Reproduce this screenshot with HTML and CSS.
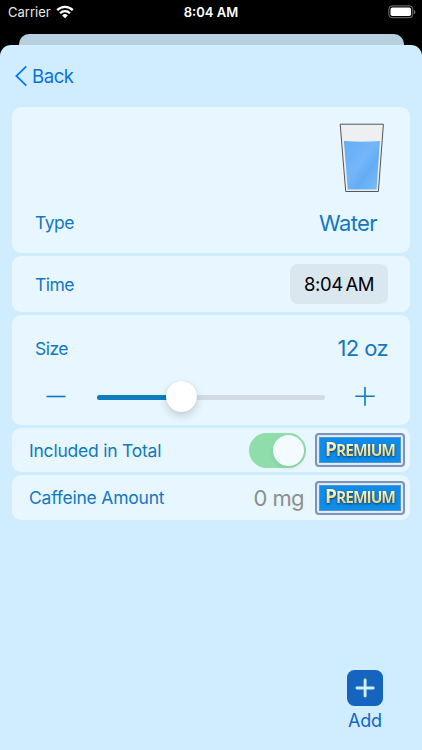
FILE: index.html
```html
<!DOCTYPE html>
<html lang="en">
<head>
    <meta charset="UTF-8">
    <meta name="viewport" content="width=device-width, initial-scale=1.0">
    <title>Add Drink</title>
    <link rel="stylesheet" href="styles.css">
</head>
<body>
    <header class="status-bar">
        <div class="carrier">
            <span>Carrier</span>
            <svg width="18" height="14" viewBox="0 0 18 14">
                <g fill="none" stroke="#fff" stroke-width="2.3">
                    <path d="M1.2 5.1a11 11 0 0 1 15.6 0"/>
                    <path d="M4.1 8.2a6.9 6.9 0 0 1 9.8 0"/>
                </g>
                <path d="M9 13.2L6.2 10.4a4 4 0 0 1 5.6 0z" fill="#fff"/>
            </svg>
        </div>
        <div class="clock">8:04 AM</div>
        <svg class="battery" width="28" height="14" viewBox="0 0 28 14">
            <rect x="0.8" y="0.9" width="24" height="11.8" rx="3.2" fill="none" stroke="#777"/>
            <rect x="2.5" y="2.6" width="20.6" height="8.4" rx="1.8" fill="#fff"/>
            <path d="M26 5v4q1.4-.6 1.4-2T26 5z" fill="#777"/>
        </svg>
    </header>
    <div class="back-sheet"></div>
    <main class="sheet">
        <nav class="nav">
            <svg width="13" height="22" viewBox="0 0 13 22">
                <path d="M11.3 1.3L1.4 11l9.9 9.7" fill="none" stroke="#0a7aea" stroke-width="1.8"/>
            </svg>
            <span>Back</span>
        </nav>

        <section class="card type-card">
            <svg class="glass" width="46" height="70" viewBox="0 0 46 70">
                <defs>
                    <linearGradient id="water" x1="0" y1="0" x2="1" y2="1">
                        <stop offset="0" stop-color="#62acf5"/>
                        <stop offset="0.45" stop-color="#74b6fa"/>
                        <stop offset="0.65" stop-color="#64adf6"/>
                        <stop offset="1" stop-color="#7cbbf8"/>
                    </linearGradient>
                </defs>
                <path d="M1.2 1.2h43.2l-5 67.3H6.7z" fill="#eeeff0" stroke="#555" stroke-width="1"/>
                <path d="M4.9 18q18 1.4 36 0L37.6 66.4H8.7z" fill="url(#water)"/>
            </svg>
            <div class="row">
                <span class="label">Type</span>
                <span class="value">Water</span>
            </div>
        </section>

        <section class="card time-card">
            <span class="label">Time</span>
            <span class="time">8:04&#8198;AM</span>
        </section>

        <section class="card size-card">
            <div class="row">
                <span class="label">Size</span>
                <span class="value">12 oz</span>
            </div>
            <div class="slider-row">
                <svg width="20" height="20" viewBox="0 0 20 20">
                    <path d="M0.5 9.5h19" stroke="#1278bf" stroke-width="1.6"/>
                </svg>
                <div class="track"><div class="fill"></div><div class="thumb"></div></div>
                <svg width="20" height="20" viewBox="0 0 20 20">
                    <path d="M0.3 9.3h19.4M10 -.2v19" stroke="#1278bf" stroke-width="1.6"/>
                </svg>
            </div>
        </section>

        <section class="card option total-card">
            <span class="label">Included in Total</span>
            <div class="toggle"><div class="knob"></div></div>
            <div class="premium"><div class="plate"><span>P<small>REMIUM</small></span></div></div>
        </section>

        <section class="card option">
            <span class="label">Caffeine Amount</span>
            <span class="amount">0 mg</span>
            <div class="premium"><div class="plate"><span>P<small>REMIUM</small></span></div></div>
        </section>

        <div class="add">
            <svg width="36" height="36" viewBox="0 0 36 36">
                <rect width="36" height="36" rx="7.5" fill="#1565c0"/>
                <path d="M10 18h16.2M18.1 9.9v16.2" stroke="#d0edff" stroke-width="2.9" stroke-linecap="round"/>
            </svg>
            <span>Add</span>
        </div>
    </main>
</body>
</html>
```
FILE: styles.css
```css
* {
    box-sizing: border-box;
}
body {
    margin: 0;
    height: 750px;
    overflow: hidden;
    display: flex;
    flex-direction: column;
    background: #000;
    font-family: Inter, "Liberation Sans", sans-serif;
    color: #1278bf;
}
svg {
    display: block;
    flex: none;
}
.status-bar {
    display: grid;
    grid-template-columns: 1fr auto 1fr;
    align-items: center;
    height: 34px;
    padding: 0 6px 10px 8px;
    color: #fff;
    font-size: 13px;
    line-height: 24px;
}
.carrier {
    display: flex;
    align-items: center;
    gap: 5px;
    color: #e8e8e8;
}
.clock {
    margin-left: -2px;
    font-weight: 600;
}
.battery {
    justify-self: end;
    margin-top: -1px;
}
.back-sheet {
    height: 11px;
    margin: 0 18px 0 19px;
    border-radius: 10px 10px 0 0;
    background: #b6d0e0;
}
.sheet {
    flex: 1;
    display: flex;
    flex-direction: column;
    gap: 3px;
    padding: 0 12px;
    border-radius: 11px 11px 0 0;
    background: #cfedff;
}
.nav {
    display: flex;
    align-items: center;
    gap: 4px;
    height: 59px;
    padding: 3px 0 0 3px;
    color: #0a72d8;
    font-size: 18.5px;
    letter-spacing: -0.4px;
}
.card {
    border-radius: 9px;
    background: #e8f7ff;
}
.row {
    display: flex;
    justify-content: space-between;
    align-items: center;
}
.label {
    font-size: 17.5px;
    letter-spacing: -0.5px;
}
.value {
    font-size: 22px;
    letter-spacing: -0.6px;
}
.type-card {
    height: 146px;
    padding: 16px 33px 0 23px;
}
.glass {
    margin: 0 -8px 0 auto;
}
.type-card .row {
    height: 59px;
}
.time-card {
    display: flex;
    align-items: center;
    justify-content: space-between;
    height: 56px;
    padding: 0 22px 0 23px;
}
.time {
    width: 98px;
    border-radius: 8px;
    background: #dbe7ee;
    color: #000;
    font-size: 18.5px;
    line-height: 40px;
    letter-spacing: -0.4px;
    text-align: center;
}
.size-card {
    height: 110px;
    padding: 13px 22px 0 23px;
}
.size-card .row {
    height: 40px;
}
.slider-row {
    display: flex;
    align-items: center;
    justify-content: space-between;
    height: 32px;
    margin-top: 13px;
    padding: 0 13px 0 11px;
}
.track {
    position: relative;
    width: 228px;
    height: 5px;
    border-radius: 3px;
    background: #d2dbe3;
}
.fill {
    width: 85px;
    height: 5px;
    border-radius: 3px;
    background: #0d7cc0;
}
.thumb {
    position: absolute;
    left: 69.5px;
    top: -13.5px;
    width: 31px;
    height: 31px;
    border-radius: 50%;
    background: #fff;
    box-shadow: 0 4px 9px rgba(0, 0, 0, 0.16), 0 0 1px rgba(0, 0, 0, 0.15);
}
.option {
    display: flex;
    align-items: center;
    height: 45px;
    padding: 0 5px 0 17px;
}
.total-card {
    height: 44px;
}
.option .label {
    flex: 1;
    letter-spacing: -0.22px;
}
.toggle {
    width: 57px;
    height: 35px;
    margin-right: 9px;
    padding: 2px;
    border-radius: 18px;
    background: #8eddaa;
}
.knob {
    width: 31px;
    height: 31px;
    margin-left: auto;
    border-radius: 50%;
    background: #f3fbff;
    box-shadow: 0 2px 5px rgba(0, 0, 0, 0.08);
}
.amount {
    margin-right: 11px;
    color: #8b8f92;
    font-size: 22px;
    letter-spacing: -0.6px;
}
.premium {
    width: 90px;
    height: 34px;
    padding: 2px;
    border: 2px solid #7c93ba;
    border-radius: 4px;
    background: #e2ebf5;
}
.plate {
    display: flex;
    align-items: center;
    justify-content: center;
    height: 26px;
    border: 1px solid #4f9ad4;
    background: #0e8ce8;
}
.plate span {
    margin-top: -2px;
    background: linear-gradient(#fff6c8 25%, #efd582 75%);
    -webkit-background-clip: text;
    background-clip: text;
    color: transparent;
    font-family: "Open Sans", "Noto Sans", sans-serif;
    font-size: 19px;
    font-weight: 700;
    line-height: 24px;
    letter-spacing: -1px;
    filter: drop-shadow(0 1px 1px #063a66);
}
.plate small {
    font-size: 15.5px;
}
.add {
    display: flex;
    flex-direction: column;
    align-items: center;
    width: 60px;
    margin: auto 15px 17px auto;
    gap: 3px;
    color: #1565c0;
    font-size: 18px;
    line-height: 24px;
    letter-spacing: -0.2px;
}
```
